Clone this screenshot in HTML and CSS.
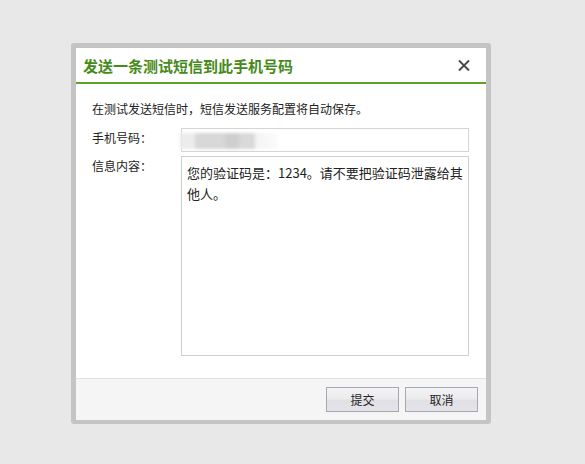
FILE: index.html
```html
<!DOCTYPE html>
<html lang="zh-CN">
<head>
<meta charset="utf-8">
<title>发送测试短信</title>
<link rel="stylesheet" href="styles.css">
</head>
<body>
<div class="dialog">
  <div class="dialog-title">
    <span class="title-text">发送一条测试短信到此手机号码</span>
    <svg class="close" width="12" height="11" viewBox="0 0 12 11"><path d="M1 0.5 L11 10.5 M11 0.5 L1 10.5" stroke="#4a4a4a" stroke-width="2" fill="none"/></svg>
  </div>
  <div class="dialog-body">
    <p class="intro">在测试发送短信时，短信发送服务配置将自动保存。</p>
    <div class="row">
      <label class="label">手机号码：</label>
      <div class="input"><span class="masked"></span></div>
    </div>
    <div class="row">
      <label class="label">信息内容：</label>
      <textarea class="textarea">您的验证码是：1234。请不要把验证码泄露给其他人。</textarea>
    </div>
  </div>
  <div class="dialog-footer">
    <button class="btn">提交</button>
    <button class="btn">取消</button>
  </div>
</div>
</body>
</html>
```
FILE: styles.css
```css
html, body {
  margin: 0;
  padding: 0;
}
body {
  background: #e8e8e8;
  font-family: "Noto Sans CJK SC", "Noto Sans", sans-serif;
  font-size: 12px;
  color: #222;
  height: 464px;
  overflow: hidden;
}
.dialog {
  margin: 43px 0 0 71px;
  width: 420px;
  box-sizing: border-box;
  border: 5px solid #c4c4c4;
  border-bottom-width: 4px;
  border-radius: 3px;
  background: #fff;
}
.dialog-title {
  height: 36px;
  box-sizing: border-box;
  padding: 2px 16px 0 7px;
  display: flex;
  align-items: center;
  justify-content: space-between;
  border-bottom: 2px solid #5aa22a;
}
.title-text {
  font-size: 15px;
  font-weight: bold;
  color: #468a18;
  line-height: 18px;
}
.close {
  display: block;
  margin-top: -2px;
}
.dialog-body {
  padding: 16px 17px 22px 16px;
}
.intro {
  margin: 0 0 10px;
  line-height: 18px;
}
.row {
  display: flex;
  align-items: flex-start;
}
.row + .row {
  margin-top: 4px;
}
.label {
  width: 89px;
  flex: none;
  line-height: 18px;
  padding-top: 1px;
}
.input {
  width: 288px;
  height: 24px;
  box-sizing: border-box;
  border: 1px solid #d4d4d4;
  background: #fff;
}
.masked {
  display: block;
  margin: 4px 0 0 -2px;
  width: 98px;
  height: 16px;
  background: linear-gradient(to right, #ececec 0, #ececec 14px, #d8d8d8 16px, #d8d8d8 44px, #cfcfcf 46px, #cfcfcf 58px, #d9d9d9 60px, #d9d9d9 74px, #f4f4f4 76px, #fbfbfb 98px);
  filter: blur(1.5px);
}
.textarea {
  width: 288px;
  height: 200px;
  box-sizing: border-box;
  border: 1px solid #cfcfcf;
  padding: 5px 2px 0 5px;
  margin: 0;
  resize: none;
  overflow: hidden;
  font-family: "Noto Sans CJK SC", "Noto Sans", sans-serif;
  font-size: 13px;
  line-height: 21px;
  color: #222;
  outline: none;
}
.dialog-footer {
  border-top: 1px solid #e0e0e0;
  background: #f5f5f5;
  padding: 8px;
  display: flex;
  justify-content: flex-end;
  gap: 6px;
}
.btn {
  width: 73px;
  height: 25px;
  box-sizing: border-box;
  border: 1px solid #a6a6b4;
  background: linear-gradient(#f3f3f5 0, #ececef 45%, #e1e1e5 55%, #e4e4e8 100%);
  font-family: "Noto Sans CJK SC", "Noto Sans", sans-serif;
  font-size: 12px;
  color: #222;
  padding: 0;
  margin: 0;
}
```
